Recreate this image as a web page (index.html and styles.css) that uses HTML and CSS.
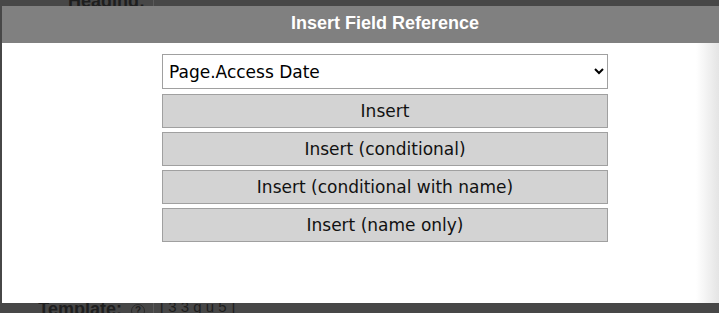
FILE: index.html
```html
<!DOCTYPE html>
<html lang="en">
<head>
    <meta charset="UTF-8">
    <meta name="viewport" content="width=device-width, initial-scale=1.0">
    <title>Insert Field Reference</title>
    <link rel="stylesheet" href="styles.css">
</head>
<body>
    <div class="page">
        <div class="field-row row-heading">
            <label class="field-label">Heading:</label>
            <div class="field-value"></div>
        </div>
        <div class="field-row row-template">
            <label class="field-label">Template: <span class="help">?</span></label>
            <div class="field-value">[ 3 3 g u 5 ]</div>
        </div>
    </div>

    <div class="dialog">
        <div class="dialog-title">Insert Field Reference</div>
        <div class="dialog-body">
            <select class="field-select">
                <option>Page.Access Date</option>
                <option>Page.Title</option>
                <option>Page.Modified Date</option>
            </select>
            <button type="button">Insert</button>
            <button type="button">Insert (conditional)</button>
            <button type="button">Insert (conditional with name)</button>
            <button type="button">Insert (name only)</button>
        </div>
        <div class="edge-fade"></div>
    </div>
</body>
</html>
```

FILE: styles.css
```css
body {
    margin: 0;
    padding: 0;
    background-color: #474747;
    font-family: "Liberation Sans", Arial, sans-serif;
    overflow: hidden;
}

.page {
    height: 313px;
    display: flex;
    flex-direction: column;
    justify-content: space-between;
}

.field-row {
    display: flex;
    align-items: center;
}

.row-heading {
    margin-top: -10px;
}

.row-template {
    margin-bottom: -7px;
}

.field-label {
    width: 153px;
    text-align: right;
    font-weight: bold;
    font-size: 18px;
    color: #1e1e1e;
    padding-right: 8px;
    box-sizing: border-box;
}

.help {
    display: inline-block;
    width: 12px;
    height: 12px;
    margin-left: 4px;
    border: 1.5px solid #2a2a2a;
    border-radius: 50%;
    font-size: 10px;
    line-height: 12px;
    text-align: center;
    vertical-align: 1px;
}

.field-value {
    border-left: 1px solid #5a5a5a;
    height: 22px;
    padding-left: 6px;
    color: #1e1e1e;
    font-size: 15px;
}

.dialog {
    position: absolute;
    top: 6px;
    left: 2px;
    width: 766px;
    height: 297px;
    background: #fff;
}

.dialog-title {
    height: 37px;
    line-height: 35px;
    background: #808080;
    color: #fff;
    text-align: center;
    font-weight: bold;
    font-size: 18px;
}

.dialog-body {
    width: 446px;
    margin: 11px auto 0;
    display: flex;
    flex-direction: column;
    gap: 4px;
    font-family: "DejaVu Sans", Tahoma, sans-serif;
}

.field-select {
    height: 35px;
    margin-bottom: 1px;
    padding: 0 2px;
    border: 1px solid #a0a0a0;
    background: #fff;
    font-family: inherit;
    font-size: 17px;
    color: #000;
}

.dialog-body button {
    height: 34px;
    padding: 0;
    border: 1px solid #a0a0a0;
    background: #d3d3d3;
    font-family: inherit;
    font-size: 17px;
    color: #111;
    cursor: pointer;
}

.dialog-body button:hover {
    background: #c4c4c4;
}

.edge-fade {
    position: absolute;
    top: 37px;
    left: 694px;
    width: 23px;
    bottom: 0;
    background: linear-gradient(to right, rgba(230, 230, 230, 0), #e4e4e4);
}
```
